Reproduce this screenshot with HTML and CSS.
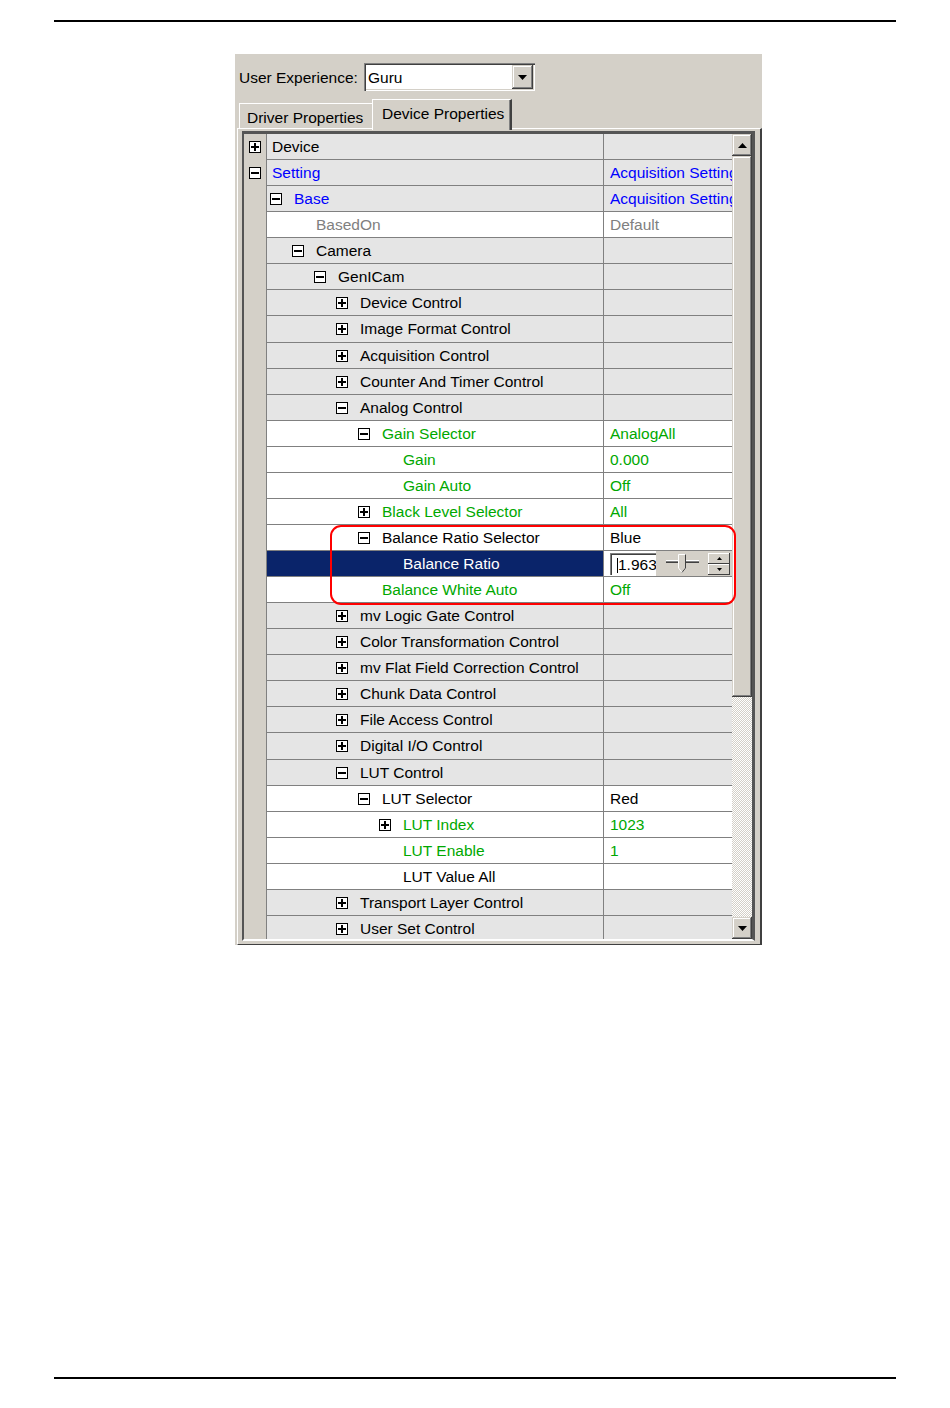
FILE: index.html
```html
<!DOCTYPE html>
<html lang="en">
<head>
  <meta charset="UTF-8">
  <title>Device Properties</title>
  <link rel="stylesheet" href="styles.css">
</head>
<body>
  <div class="rule rule-top"></div>

  <div class="panel">
    <div class="ux-row">
      <span class="ux-label">User Experience:</span>
      <div class="combo">
        <span class="combo-text">Guru</span>
        <div class="combo-btn">
          <svg width="9" height="5" viewBox="0 0 9 5"><polygon points="0,0 9,0 4.5,5" fill="#000"/></svg>
        </div>
      </div>
    </div>

    <div class="tabs">
      <div class="tab">Driver Properties</div>
      <div class="tab active">Device Properties</div>
    </div>

    <div class="tab-body">
      <div class="grid">
        <div class="tree">
          <div class="row cat"><div class="gut"><i class="bx plus"></i></div><div class="name l0">Device</div><div class="val"></div></div>
          <div class="row cat"><div class="gut"><i class="bx"></i></div><div class="name l0 blue">Setting</div><div class="val blue">Acquisition Setting</div></div>
          <div class="row cat"><div class="gut"></div><div class="name l1 blue"><span class="slot"><i class="bx"></i></span>Base</div><div class="val blue">Acquisition Setting</div></div>
          <div class="row prop"><div class="gut"></div><div class="name l2 gray"><span class="slot"></span>BasedOn</div><div class="val gray">Default</div></div>
          <div class="row cat"><div class="gut"></div><div class="name l2"><span class="slot"><i class="bx"></i></span>Camera</div><div class="val"></div></div>
          <div class="row cat"><div class="gut"></div><div class="name l3"><span class="slot"><i class="bx"></i></span>GenICam</div><div class="val"></div></div>
          <div class="row cat"><div class="gut"></div><div class="name l4"><span class="slot"><i class="bx plus"></i></span>Device Control</div><div class="val"></div></div>
          <div class="row cat"><div class="gut"></div><div class="name l4"><span class="slot"><i class="bx plus"></i></span>Image Format Control</div><div class="val"></div></div>
          <div class="row cat"><div class="gut"></div><div class="name l4"><span class="slot"><i class="bx plus"></i></span>Acquisition Control</div><div class="val"></div></div>
          <div class="row cat"><div class="gut"></div><div class="name l4"><span class="slot"><i class="bx plus"></i></span>Counter And Timer Control</div><div class="val"></div></div>
          <div class="row cat"><div class="gut"></div><div class="name l4"><span class="slot"><i class="bx"></i></span>Analog Control</div><div class="val"></div></div>
          <div class="row prop"><div class="gut"></div><div class="name l5 green"><span class="slot"><i class="bx"></i></span>Gain Selector</div><div class="val green">AnalogAll</div></div>
          <div class="row prop"><div class="gut"></div><div class="name l6 green"><span class="slot"></span>Gain</div><div class="val green">0.000</div></div>
          <div class="row prop"><div class="gut"></div><div class="name l6 green"><span class="slot"></span>Gain Auto</div><div class="val green">Off</div></div>
          <div class="row prop"><div class="gut"></div><div class="name l5 green"><span class="slot"><i class="bx plus"></i></span>Black Level Selector</div><div class="val green">All</div></div>
          <div class="row prop"><div class="gut"></div><div class="name l5"><span class="slot"><i class="bx"></i></span>Balance Ratio Selector</div><div class="val">Blue</div></div>
          <div class="row prop sel">
            <div class="gut"></div>
            <div class="name l6"><span class="slot"></span>Balance Ratio</div>
            <div class="val editor">
              <div class="num-box"><span class="caret"></span>1.963</div>
              <div class="edit-tools">
                <svg class="slider" width="33" height="20" viewBox="0 0 33 20">
                  <rect x="0" y="6" width="33" height="1" fill="#fff"/>
                  <rect x="0" y="7" width="33" height="1" fill="#808080"/>
                  <rect x="0" y="8" width="33" height="1" fill="#404040"/>
                  <polygon points="12.5,0.5 19.5,0.5 19.5,14 16,18.5 12.5,14" fill="#d4d0c8" stroke="#fff"/>
                  <polyline points="19.5,0.5 19.5,14 16,18.5" fill="none" stroke="#404040"/>
                </svg>
                <div class="spin">
                  <div class="spin-btn"><svg width="5" height="3" viewBox="0 0 5 3"><polygon points="2.5,0 5,3 0,3" fill="#000"/></svg></div>
                  <div class="spin-btn"><svg width="5" height="3" viewBox="0 0 5 3"><polygon points="0,0 5,0 2.5,3" fill="#000"/></svg></div>
                </div>
              </div>
            </div>
          </div>
          <div class="row prop"><div class="gut"></div><div class="name l5 green"><span class="slot"></span>Balance White Auto</div><div class="val green">Off</div></div>
          <div class="row cat"><div class="gut"></div><div class="name l4"><span class="slot"><i class="bx plus"></i></span>mv Logic Gate Control</div><div class="val"></div></div>
          <div class="row cat"><div class="gut"></div><div class="name l4"><span class="slot"><i class="bx plus"></i></span>Color Transformation Control</div><div class="val"></div></div>
          <div class="row cat"><div class="gut"></div><div class="name l4"><span class="slot"><i class="bx plus"></i></span>mv Flat Field Correction Control</div><div class="val"></div></div>
          <div class="row cat"><div class="gut"></div><div class="name l4"><span class="slot"><i class="bx plus"></i></span>Chunk Data Control</div><div class="val"></div></div>
          <div class="row cat"><div class="gut"></div><div class="name l4"><span class="slot"><i class="bx plus"></i></span>File Access Control</div><div class="val"></div></div>
          <div class="row cat"><div class="gut"></div><div class="name l4"><span class="slot"><i class="bx plus"></i></span>Digital I/O Control</div><div class="val"></div></div>
          <div class="row cat"><div class="gut"></div><div class="name l4"><span class="slot"><i class="bx"></i></span>LUT Control</div><div class="val"></div></div>
          <div class="row prop"><div class="gut"></div><div class="name l5"><span class="slot"><i class="bx"></i></span>LUT Selector</div><div class="val">Red</div></div>
          <div class="row prop"><div class="gut"></div><div class="name l6 green"><span class="slot"><i class="bx plus"></i></span>LUT Index</div><div class="val green">1023</div></div>
          <div class="row prop"><div class="gut"></div><div class="name l6 green"><span class="slot"></span>LUT Enable</div><div class="val green">1</div></div>
          <div class="row prop"><div class="gut"></div><div class="name l6"><span class="slot"></span>LUT Value All</div><div class="val"></div></div>
          <div class="row cat"><div class="gut"></div><div class="name l4"><span class="slot"><i class="bx plus"></i></span>Transport Layer Control</div><div class="val"></div></div>
          <div class="row cat"><div class="gut"></div><div class="name l4"><span class="slot"><i class="bx plus"></i></span>User Set Control</div><div class="val"></div></div>
        </div>

        <div class="vscroll">
          <div class="sb-btn">
            <svg width="9" height="5" viewBox="0 0 9 5"><polygon points="4.5,0 9,5 0,5" fill="#000"/></svg>
          </div>
          <div class="sb-thumb"></div>
          <div class="sb-track"></div>
          <div class="sb-btn">
            <svg width="9" height="5" viewBox="0 0 9 5"><polygon points="0,0 9,0 4.5,5" fill="#000"/></svg>
          </div>
        </div>

        <!-- highlight round the balance ratio rows -->
        <div class="mark"></div>
      </div>
    </div>
  </div>

  <div class="rule rule-bottom"></div>
</body>
</html>
```

FILE: styles.css
```css
* {
  box-sizing: border-box;
}

body {
  margin: 0;
  background: #fff;
  font-family: 'Liberation Sans', Arial, sans-serif;
  font-size: 15.5px;
  color: #000;
}

.rule {
  height: 2px;
  margin: 0 54px;
  background: #000;
}

.rule-top {
  margin-top: 20px;
}

.rule-bottom {
  margin-top: 432px;
}

.panel {
  margin: 32px 0 0 235px;
  width: 527px;
  height: 891px;
  background: #d4d0c8;
}

/* user experience combo */
.ux-row {
  display: flex;
  align-items: center;
  padding: 9px 0 0 4px;
}

.ux-label {
  width: 125px;
  padding-top: 1px;
}

.combo {
  width: 171px;
  height: 28px;
  background: #fff;
  display: flex;
  align-items: center;
  justify-content: space-between;
  padding: 2px;
  box-shadow: inset 1px 1px #808080, inset 2px 2px #404040, inset -1px -1px #fff, inset -2px -2px #d4d0c8;
}

.combo-text {
  padding: 1px 0 0 2px;
}

.combo-btn {
  width: 21px;
  height: 24px;
  background: #d4d0c8;
  display: flex;
  align-items: center;
  justify-content: center;
  box-shadow: inset -1px -1px #404040, inset 1px 1px #d4d0c8, inset -2px -2px #808080, inset 2px 2px #fff;
}

/* tabs */
.tabs {
  display: flex;
  align-items: flex-start;
  height: 29px;
  margin-top: 8px;
  padding-left: 4px;
}

.tab {
  width: 133px;
  height: 25px;
  margin-top: 4px;
  padding: 5px 0 0 7px;
  border-top: 1px solid #fff;
  border-left: 1px solid #fff;
  white-space: nowrap;
}

.tab.active {
  position: relative;
  width: 140px;
  height: 31px;
  margin-top: 0;
  padding: 5px 0 0 9px;
  background: #d4d0c8;
  border-right: 2px solid #404040;
  box-shadow: inset -1px 0 #808080;
}

.tab-body {
  margin-left: 2px;
  width: 525px;
  height: 817px;
  padding: 2px 5px 3px 4px;
  border-top: 1px solid #fff;
  border-left: 1px solid #fff;
  border-right: 2px solid #404040;
  border-bottom: 1px solid #404040;
}

/* property grid */
.grid {
  position: relative;
  display: flex;
  width: 513px;
  height: 810px;
  border-top: 3px solid #555;
  border-left: 2px solid #555;
  border-right: 3px solid #555;
  border-bottom: 2px solid #fff;
}

.tree {
  width: 488px;
  height: 805px;
  overflow: hidden;
}

.row {
  display: flex;
  height: 26.07px;
}

.gut {
  width: 23px;
  flex: none;
  background: #d4d0c8;
  border-right: 1px solid #808080;
  display: flex;
  align-items: center;
  padding-left: 5px;
}

.name {
  width: 337px;
  flex: none;
  display: flex;
  align-items: center;
  padding-top: 1px;
  white-space: nowrap;
  border-bottom: 1px solid #808080;
  border-right: 1px solid #808080;
}

.val {
  width: 128px;
  flex: none;
  padding: 1px 0 0 6px;
  display: flex;
  align-items: center;
  white-space: nowrap;
  overflow: hidden;
  border-bottom: 1px solid #808080;
}

.cat .name,
.cat .val {
  background: #e5e5e5;
}

.prop .name,
.prop .val {
  background: #fff;
}

.l0 { padding-left: 5px; }
.l1 { padding-left: 3px; }
.l2 { padding-left: 25px; }
.l3 { padding-left: 47px; }
.l4 { padding-left: 69px; }
.l5 { padding-left: 91px; }
.l6 { padding-left: 112px; }

.slot {
  width: 24px;
  flex: none;
  display: flex;
  align-items: center;
}

.bx {
  display: block;
  width: 12px;
  height: 12px;
  border: 1px solid #000;
  background: linear-gradient(#000, #000) center / 8px 2px no-repeat, #fff;
}

.bx.plus {
  background: linear-gradient(#000, #000) center / 8px 2px no-repeat,
              linear-gradient(#000, #000) center / 2px 8px no-repeat, #fff;
}

.blue { color: #0000ff; }
.green { color: #00a800; }
.gray { color: #808080; }

.sel .name {
  background: #0a246a;
  color: #fff;
}

/* inline number editor */
.val.editor {
  padding: 0 0 0 6px;
  align-items: stretch;
}

.num-box {
  width: 46px;
  height: 22px;
  margin-top: 2px;
  padding: 2px 0 0 7px;
  overflow: hidden;
  white-space: nowrap;
  background: #fff;
  box-shadow: inset 1px 1px #808080, inset 2px 2px #404040;
  display: flex;
  align-items: center;
  flex: none;
}

.caret {
  width: 1px;
  height: 15px;
  background: #000;
  flex: none;
}

.edit-tools {
  flex: 1;
  background: #d4d0c8;
  display: flex;
  align-items: center;
  padding-left: 10px;
  gap: 9px;
}

.spin {
  display: flex;
  flex-direction: column;
}

.spin-btn {
  width: 22px;
  height: 11px;
  display: flex;
  align-items: center;
  justify-content: center;
  box-shadow: inset -1px -1px #404040, inset 1px 1px #fff;
}

/* scrollbar */
.vscroll {
  width: 20px;
  height: 805px;
  display: flex;
  flex-direction: column;
}

.sb-btn,
.sb-thumb {
  background: #d4d0c8;
  box-shadow: inset -1px -1px #404040, inset 1px 1px #d4d0c8, inset -2px -2px #808080, inset 2px 2px #fff;
}

.sb-btn {
  height: 22px;
  display: flex;
  align-items: center;
  justify-content: center;
}

.sb-thumb {
  height: 541px;
}

.sb-track {
  flex: 1;
  background: repeating-conic-gradient(#fff 0 25%, #d4d0c8 0 50%) 0 0 / 2px 2px;
}

.mark {
  position: absolute;
  left: 86px;
  top: 391px;
  width: 406px;
  height: 80px;
  border: 2px solid #f00;
  border-radius: 11px;
}
```
